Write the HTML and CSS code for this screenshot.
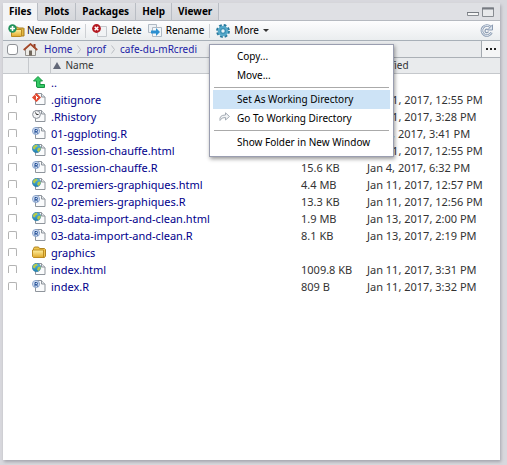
FILE: index.html
```
<!DOCTYPE html>
<html lang="en">
<head>
<meta charset="utf-8">
<title>Files</title>
<link rel="stylesheet" href="styles.css">
</head>
<body>
<svg class="sprite" aria-hidden="true">
  <defs>
    <linearGradient id="gold" x1="0" y1="0" x2="0" y2="1"><stop offset="0" stop-color="#fff0a0"/><stop offset="1" stop-color="#e0a92a"/></linearGradient>
    <linearGradient id="sky" x1="0" y1="0" x2="0" y2="1"><stop offset="0" stop-color="#5dbbe0"/><stop offset="1" stop-color="#1d80b4"/></linearGradient>
  </defs>
  <symbol id="page" viewBox="0 0 14 12">
    <path d="M3.500 .500h6l3.500 3.500v7.500h-9.500z" fill="#fafbfc" stroke="#8f959c"/>
    <path d="M9.500 .500v3.500h3.500" fill="#e4e7ea" stroke="#8f959c"/>
  </symbol>
  <symbol id="git" viewBox="0 0 14 12">
    <use href="#page"/>
    <path d="M4.500 0l4.500 4.500-4.500 4.500L0 4.500z" fill="#e24a32"/>
    <path d="M3.500 2.500l2.500 2.500M4.500 3.500v3" stroke="#fff" fill="none"/>
  </symbol>
  <symbol id="clock" viewBox="0 0 14 12">
    <use href="#page"/>
    <circle cx="4.500" cy="4.500" r="3.900" fill="#f2f3f5" stroke="#8b9199"/>
    <path d="M3.500 2.500L4.500 4.500H6.500" stroke="#333" fill="none"/>
  </symbol>
  <symbol id="rfile" viewBox="0 0 14 12">
    <use href="#page"/>
    <circle cx="4" cy="4" r="3.600" fill="#cfdcf0" stroke="#7f9cc8" stroke-width=".8"/>
    <path d="M3 6.500V2.500h1.500a1 1 0 0 1 0 2.200H3M4.500 4.500L5.500 6.500" stroke="#1f4c94" fill="none"/>
  </symbol>
  <symbol id="html" viewBox="0 0 14 12">
    <use href="#page"/>
    <circle cx="4.500" cy="4.500" r="4.200" fill="url(#sky)" stroke="#2d7396" stroke-width=".5"/>
    <path d="M1 3Q3 .500 5 .800L5.500 2.500 3.500 3.500 3 5.500 1 4.500zM6 4l2.500-.500V5.500L6.500 8 5 6.500z" fill="#b7ca45"/>
  </symbol>
  <symbol id="folder" viewBox="0 0 14 12">
    <path d="M1.500 11V2.500l1-1.500h4l1 1.500h5l1 1V10l-1 1.500H2z" fill="#efc54c" stroke="#b18422"/>
    <path d="M.500 4h11V11l-.500.500H1.500l-1-1z" fill="url(#gold)" stroke="#bd8d22"/>
  </symbol>
  <symbol id="up" viewBox="0 0 12 12">
    <path d="M5 .500L9.500 5H7v3.500h4.500v3H5Q3.500 11.500 3.500 10V5H.500z" fill="#35c965" stroke="#169343"/>
  </symbol>
</svg>

<main class="pane">
  <header class="tabs">
    <nav class="tablist" role="tablist">
      <button class="tab active" role="tab" aria-selected="true">Files</button>
      <button class="tab" role="tab">Plots</button>
      <button class="tab" role="tab">Packages</button>
      <button class="tab" role="tab">Help</button>
      <button class="tab" role="tab">Viewer</button>
    </nav>
    <button class="win" aria-label="Minimize"><svg width="12" height="10" viewBox="0 0 12 10"><path d="M.500 5.500h11v3H.500z" fill="#f5f5f5" stroke="#888c92"/><path d="M0 5.500h12" stroke="#777b82"/></svg></button>
    <button class="win" aria-label="Maximize"><svg width="12" height="10" viewBox="0 0 12 10"><path d="M.500 1h11v8.500H.500z" fill="#e8e9eb" stroke="#888c92"/><path d="M0 1.500h12" stroke="#777b82" stroke-width="2"/></svg></button>
  </header>

  <div class="toolbar">
    <button class="tool new">
      <svg width="17" height="14" viewBox="0 0 17 14"><path d="M4.500 12V4l1-1h4l1 1h5l.500.500V12z" fill="#e3b842" stroke="#a57b1f"/><path d="M3.500 5.500h10V12l-1 .500h-9z" fill="url(#gold)" stroke="#b98a22"/><circle cx="4.500" cy="4.500" r="4.200" fill="#22925c"/><path d="M4.500 2v5M2 4.500h5" stroke="#fff" stroke-width="1.600"/></svg>New Folder</button>
    <span class="rule"></span>
    <button class="tool delete">
      <svg width="15" height="13" viewBox="0 0 15 13"><path d="M5.500 2.500h9v10h-9z" fill="#f1f3f5" stroke="#c4c8cd"/><circle cx="4.500" cy="4.500" r="4.400" fill="#b41921"/><path d="M2.700 2.700l3.600 3.600M6.300 2.700L2.700 6.300" stroke="#fff" stroke-width="1.500"/></svg>Delete</button>
    <button class="tool">
      <svg width="14" height="13" viewBox="0 0 14 13"><path d="M.500 .500h8v8h-8z" fill="#edf1f5" stroke="#afb9c4"/><path d="M4.500 3.500h9v9h-9z" fill="#f5f8fa" stroke="#afb9c4"/><path d="M3 6.500h5V4l4 4-4 4V9.500H3z" fill="#2c8fd0"/></svg>Rename</button>
    <span class="rule"></span>
    <button class="tool more" aria-haspopup="true" aria-expanded="true">
      <svg width="14" height="14" viewBox="0 0 14 14"><circle cx="7" cy="7" r="5.700" fill="none" stroke="#27799d" stroke-width="2.500" stroke-dasharray="2.600 1.877"/><circle cx="7" cy="7" r="5.300" fill="#56a9ca"/><circle cx="7" cy="7" r="3" fill="#3b90b5"/><circle cx="7" cy="7" r="1.700" fill="#e9f3f7"/></svg>More<i class="caret"></i></button>
    <button class="refresh" aria-label="Refresh"><svg width="14" height="13" viewBox="0 0 14 13"><path d="M10.500 3A5 5 0 1 0 11.500 8.500" fill="none" stroke="#8b9bb2" stroke-width="2.600"/><path d="M10.500 3A5 5 0 1 0 11.500 8.500" fill="none" stroke="#e6edf5"/><path d="M8 5.500A1.800 1.800 0 1 0 8.500 7.500" fill="none" stroke="#8b9bb2" stroke-width="1.200"/><path d="M12.500 .800V6H7.500z" fill="#dce5ef" stroke="#8b9bb2"/></svg></button>
    <div class="menu" role="menu">
      <button class="item" role="menuitem">Copy...</button>
      <button class="item" role="menuitem">Move...</button>
      <hr>
      <button class="item hot" role="menuitem">Set As Working Directory</button>
      <button class="item" role="menuitem"><svg class="goto" width="11" height="9" viewBox="0 0 11 9"><path d="M1 8.500Q0 3 6.500 3V.800L10.500 4.500 6.500 8V5.500Q2.500 5 1 8.500z" fill="#f1f3f5" stroke="#a5acb5"/></svg>Go To Working Directory</button>
      <hr>
      <button class="item" role="menuitem">Show Folder in New Window</button>
    </div>
  </div>

  <div class="path">
    <input class="all" type="checkbox" aria-label="Select all">
    <svg width="15" height="13" viewBox="0 0 15 13"><path d="M2.500 6v6.500h10V6l-5-4.500z" fill="#eceae5" stroke="#93908c"/><path d="M10.500 1h2v4h-2z" fill="#8f3a22"/><path d="M.700 7L7.500 1l6.800 6" fill="none" stroke="#a5482a" stroke-width="1.700"/><path d="M6 7.500h3v5H6z" fill="#71675c"/></svg>
    <nav class="crumbs">
      <a href="#home">Home</a><svg width="4" height="9" viewBox="0 0 4 9"><path d="M.500 .500l3 4-3 4" fill="none" stroke="#b9bdc2"/></svg>
      <a href="#prof">prof</a><svg width="4" height="9" viewBox="0 0 4 9"><path d="M.500 .500l3 4-3 4" fill="none" stroke="#b9bdc2"/></svg>
      <a href="#cafe">cafe-du-mRcredi</a>
    </nav>
    <button class="browse" aria-label="Browse"><i></i><i></i><i></i></button>
  </div>

  <table class="files">
    <colgroup><col class="c-check"><col class="c-icon"><col><col class="c-size"><col class="c-date"></colgroup>
    <thead><tr><th></th><th></th><th><i class="sort"></i>Name</th><th></th><th>Modified</th></tr></thead>
    <tbody>
      <tr><td></td><td><svg class="up" width="12" height="12"><use href="#up"/></svg></td><td><a href="#up">..</a></td><td></td><td></td></tr>
      <tr><td><input type="checkbox" aria-label=".gitignore"></td><td><svg width="14" height="12"><use href="#git"/></svg></td><td><a href="#f1">.gitignore</a></td><td></td><td>Jan 11, 2017, 12:55 PM</td></tr>
      <tr><td><input type="checkbox" aria-label=".Rhistory"></td><td><svg width="14" height="12"><use href="#clock"/></svg></td><td><a href="#f2">.Rhistory</a></td><td></td><td>Jan 11, 2017, 3:28 PM</td></tr>
      <tr><td><input type="checkbox" aria-label="01-ggploting.R"></td><td><svg width="14" height="12"><use href="#rfile"/></svg></td><td><a href="#f3">01-ggploting.R</a></td><td></td><td>Jan 4, 2017, 3:41 PM</td></tr>
      <tr><td><input type="checkbox" aria-label="01-session-chauffe.html"></td><td><svg width="14" height="12"><use href="#html"/></svg></td><td><a href="#f4">01-session-chauffe.html</a></td><td></td><td>Jan 11, 2017, 12:55 PM</td></tr>
      <tr><td><input type="checkbox" aria-label="01-session-chauffe.R"></td><td><svg width="14" height="12"><use href="#rfile"/></svg></td><td><a href="#f5">01-session-chauffe.R</a></td><td>15.6 KB</td><td>Jan 4, 2017, 6:32 PM</td></tr>
      <tr><td><input type="checkbox" aria-label="02-premiers-graphiques.html"></td><td><svg width="14" height="12"><use href="#html"/></svg></td><td><a href="#f6">02-premiers-graphiques.html</a></td><td>4.4 MB</td><td>Jan 11, 2017, 12:57 PM</td></tr>
      <tr><td><input type="checkbox" aria-label="02-premiers-graphiques.R"></td><td><svg width="14" height="12"><use href="#rfile"/></svg></td><td><a href="#f7">02-premiers-graphiques.R</a></td><td>13.3 KB</td><td>Jan 11, 2017, 12:56 PM</td></tr>
      <tr><td><input type="checkbox" aria-label="03-data-import-and-clean.html"></td><td><svg width="14" height="12"><use href="#html"/></svg></td><td><a href="#f8">03-data-import-and-clean.html</a></td><td>1.9 MB</td><td>Jan 13, 2017, 2:00 PM</td></tr>
      <tr><td><input type="checkbox" aria-label="03-data-import-and-clean.R"></td><td><svg width="14" height="12"><use href="#rfile"/></svg></td><td><a href="#f9">03-data-import-and-clean.R</a></td><td>8.1 KB</td><td>Jan 13, 2017, 2:19 PM</td></tr>
      <tr><td><input type="checkbox" aria-label="graphics"></td><td><svg width="14" height="12"><use href="#folder"/></svg></td><td><a href="#f10">graphics</a></td><td></td><td></td></tr>
      <tr><td><input type="checkbox" aria-label="index.html"></td><td><svg width="14" height="12"><use href="#html"/></svg></td><td><a href="#f11">index.html</a></td><td>1009.8 KB</td><td>Jan 11, 2017, 3:31 PM</td></tr>
      <tr><td><input type="checkbox" aria-label="index.R"></td><td><svg width="14" height="12"><use href="#rfile"/></svg></td><td><a href="#f12">index.R</a></td><td>809 B</td><td>Jan 11, 2017, 3:32 PM</td></tr>
    </tbody>
  </table>
</main>
</body>
</html>
```
FILE: styles.css
```
* { box-sizing: border-box; }

body {
  margin: 0;
  padding: 3px 7px 5px 3px;
  min-height: 100vh;
  display: flex;
  background: #d8d8dd;
  font-family: "Noto Sans", "Open Sans", sans-serif;
  font-size: 11px;
  line-height: 17px;
  color: #000;
}

button {
  margin: 0;
  padding: 0;
  border: 0;
  background: none;
  font: inherit;
  color: inherit;
}

svg { display: block; flex: none; }
a { color: #00008b; text-decoration: none; }

.sprite { position: absolute; width: 0; height: 0; }

.pane {
  flex: 1;
  min-width: 0;
  display: flex;
  flex-direction: column;
  background: #fff;
  box-shadow: 1px 2px 3px #a6a6ae;
}

.tabs, .toolbar, .path, .files th { font-size: 10px; }

.tabs {
  display: flex;
  align-items: center;
  height: 18px;
  padding-right: 6px;
  gap: 3px;
  background: #dfe0e4;
  border-bottom: 1px solid #b5b9c0;
}

.tablist { display: flex; flex: 1; height: 18px; }

.tab {
  padding: 0 6px;
  height: 18px;
  font-weight: bold;
  line-height: 15px;
  border-right: 1px solid #b9bdc4;
  border-bottom: 1px solid #b5b9c0;
  background: linear-gradient(#e0e1e5, #d5d7db);
}

.tab.active { background: #f3f4f6; border-bottom-color: #f3f4f6; }

.toolbar {
  position: relative;
  display: flex;
  align-items: center;
  height: 20px;
  padding: 0 6px 0 5px;
  background: linear-gradient(#fdfdfe, #eaedef);
  border-bottom: 1px solid #a8b0b8;
}

.tool { display: flex; align-items: center; gap: 4px; }
.tool.new { gap: 2px; }
.tool.delete { margin-right: 6px; }
.rule { width: 1px; height: 14px; margin: 0 6px 0 5px; background: #cdd0d4; }

.caret {
  border: 3px solid transparent;
  border-top-color: #333;
  border-bottom: 0;
}

.refresh { margin-left: auto; }

.menu {
  position: absolute;
  left: 206px;
  top: 23px;
  z-index: 2;
  width: 185px;
  padding: 2px 3px 4px;
  background: #fff;
  border: 1px solid #9a9eb0;
  box-shadow: 1px 2px 4px rgba(0, 0, 0, .4);
}

.item {
  position: relative;
  display: block;
  width: 100%;
  height: 19px;
  padding-left: 24px;
  text-align: left;
  white-space: nowrap;
}

.item.hot { background: #cde3f6; }
.goto { position: absolute; left: 6px; top: 3px; }
.menu hr { margin: 2px 1px; border: 0; border-top: 1px solid #aaa; }

.path {
  display: flex;
  align-items: center;
  height: 17px;
  padding-left: 4px;
  background: #e9ebed;
  border-bottom: 1px solid #abb0b6;
}

input[type="checkbox"] {
  appearance: none;
  display: block;
  margin: 0;
  background: #fff;
}

input.all {
  width: 11px;
  height: 11px;
  margin-right: 5px;
  border: 1px solid #8e9196;
  border-radius: 3px;
}

.crumbs { display: flex; align-items: center; gap: 5px; margin-left: 6px; }
.crumbs a { color: #1a1aa6; }

.browse {
  display: flex;
  align-items: center;
  justify-content: center;
  gap: 2px;
  width: 19px;
  height: 16px;
  margin-left: auto;
  background: #f4f5f6;
  border-left: 1px solid #a3a9b0;
}

.browse i { width: 2px; height: 2px; background: #222; }

.files { width: 100%; table-layout: fixed; border-collapse: collapse; color: #333; }
.c-check { width: 25px; }
.c-icon { width: 22px; }
.c-size { width: 66px; }
.c-date { width: 134px; }

.files th {
  height: 15px;
  padding: 0 0 0 1px;
  font-weight: normal;
  line-height: 14px;
  text-align: left;
  background: #e9ebed;
  border-bottom: 1px solid #c5c8cc;
}

.files th:nth-child(-n+2) { border-right: 1px solid #c5c8cc; }

.sort {
  display: inline-block;
  margin: 0 5px 0 1px;
  border: 4px solid transparent;
  border-top: 0;
  border-bottom: 7px solid #626878;
}

.files td { height: 17px; padding: 0 0 0 1px; white-space: nowrap; }
.files td:first-child { padding-left: 5px; }
.files td:nth-child(2) { padding-left: 4px; }
.files .up { margin-left: 1px; }

.files input {
  width: 9px;
  height: 8px;
  border: 1px solid #b3b3b3;
  border-bottom: 0;
  border-radius: 2px 2px 0 0;
}
```
